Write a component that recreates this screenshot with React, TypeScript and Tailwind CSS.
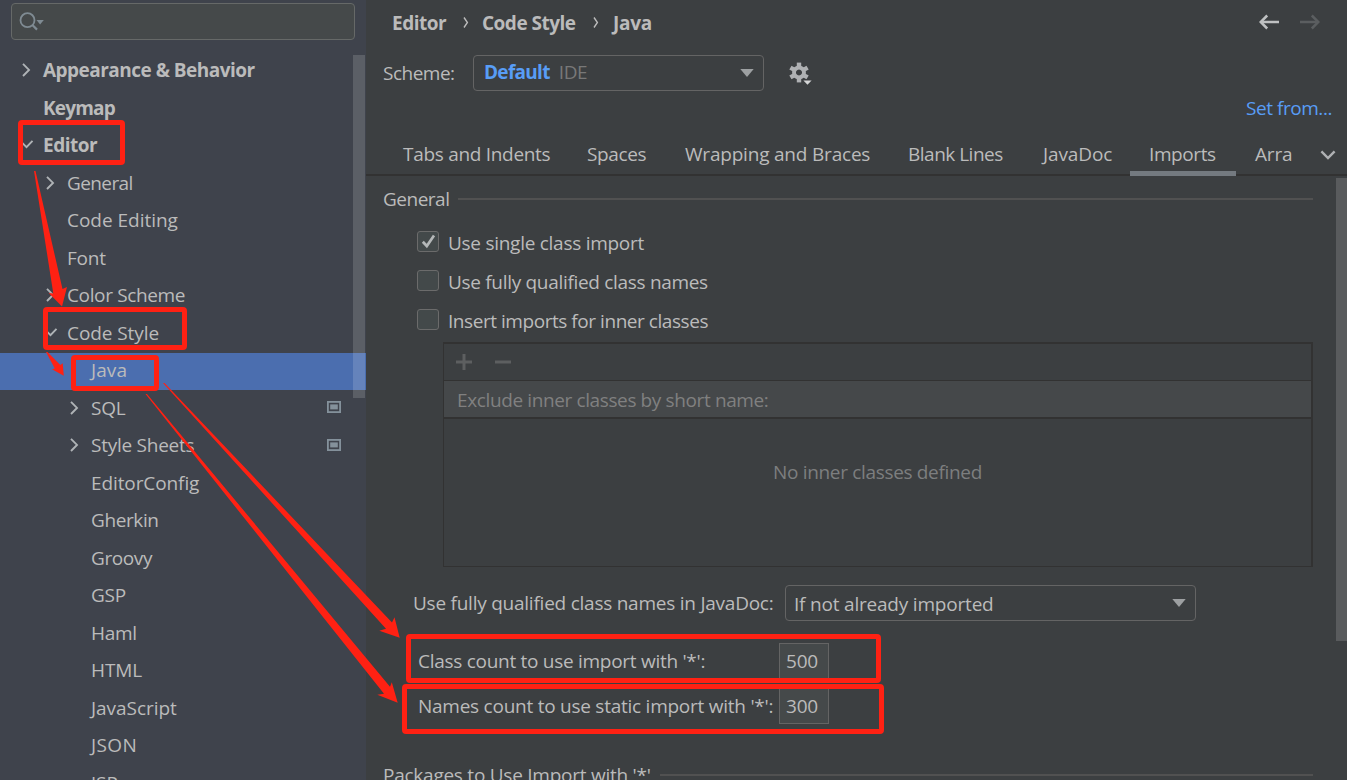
import type { ReactNode } from 'react';

type Arrow = 'right' | 'down' | null;

interface TreeItem {
  label: string;
  indent: string;
  arrow: Arrow;
  text: string;
  selected?: boolean;
  project?: boolean;
}

const L0 = 'pl-[14px]';
const L1 = 'pl-[38px]';
const L2 = 'pl-[62px]';

const tree: TreeItem[] = [
  { label: 'Appearance & Behavior', indent: L0, arrow: 'right', text: 'font-bold tracking-[-0.52px]' },
  { label: 'Keymap', indent: L0, arrow: null, text: 'font-bold tracking-[-0.8px]' },
  { label: 'Editor', indent: L0, arrow: 'down', text: 'font-bold tracking-[-0.5px]' },
  { label: 'General', indent: L1, arrow: 'right', text: 'tracking-[-0.6px]' },
  { label: 'Code Editing', indent: L1, arrow: null, text: 'tracking-[-0.02px]' },
  { label: 'Font', indent: L1, arrow: null, text: 'tracking-[-0.2px]' },
  { label: 'Color Scheme', indent: L1, arrow: 'right', text: 'tracking-[-0.36px]' },
  { label: 'Code Style', indent: L1, arrow: 'down', text: 'tracking-[-0.08px]' },
  { label: 'Java', indent: L2, arrow: null, text: 'tracking-[0.1px]', selected: true },
  { label: 'SQL', indent: L2, arrow: 'right', text: 'tracking-[-0.2px]', project: true },
  { label: 'Style Sheets', indent: L2, arrow: 'right', text: 'tracking-[-0.25px]', project: true },
  { label: 'EditorConfig', indent: L2, arrow: null, text: 'tracking-[-0.1px]' },
  { label: 'Gherkin', indent: L2, arrow: null, text: 'tracking-[-0.4px]' },
  { label: 'Groovy', indent: L2, arrow: null, text: 'tracking-[-0.4px]' },
  { label: 'GSP', indent: L2, arrow: null, text: 'tracking-[-0.3px]' },
  { label: 'Haml', indent: L2, arrow: null, text: 'tracking-[-0.3px]' },
  { label: 'HTML', indent: L2, arrow: null, text: 'tracking-[-0.1px]' },
  { label: 'JavaScript', indent: L2, arrow: null, text: 'tracking-[-0.04px]' },
  { label: 'JSON', indent: L2, arrow: null, text: 'tracking-[0.4px]' },
  { label: 'JSP', indent: L2, arrow: null, text: 'tracking-[0px]' },
];

function TreeChevron({ arrow }: { arrow: Arrow }) {
  return (
    <span className="flex h-5 w-[29px] shrink-0 items-center">
      {arrow && (
        <svg width="24" height="20" viewBox="0 0 24 20" fill="none" stroke="#afb3b6" strokeWidth="1.9">
          {arrow === 'right' ? <path d="M9 3.8 L15 9.9 L9 16" /> : <path d="M7 6.6 L12.5 12.2 L18.5 5.8" />}
        </svg>
      )}
    </span>
  );
}

function TreeRow({ item }: { item: TreeItem }) {
  return (
    <div className={`flex h-[37.5px] shrink-0 items-center pr-[25px] pb-[3px] ${item.indent} ${item.selected ? 'bg-[#4b6eaf]' : ''}`}>
      <TreeChevron arrow={item.arrow} />
      <span className={`flex-1 ${item.text}`}>{item.label}</span>
      {item.project && (
        <svg className="mb-px" width="14" height="12" viewBox="0 0 14 12">
          <rect x="0.9" y="0.9" width="12.2" height="10.2" fill="none" stroke="#84919b" strokeWidth="1.8" />
          <rect x="3.2" y="3.4" width="7.6" height="5" fill="#84919b" />
        </svg>
      )}
    </div>
  );
}

function Sidebar() {
  return (
    <aside className="relative flex w-[366px] shrink-0 flex-col overflow-hidden bg-[#3f434c]">
      <div className="h-[52.75px] shrink-0 pt-[3px] pl-[11px]">
        <div className="flex h-[37px] w-[344px] items-center rounded-[4px] border border-[#666968] bg-[#45494a] pl-[7px]">
          <svg width="28" height="22" viewBox="0 0 28 22" fill="none">
            <circle cx="8.5" cy="9.2" r="7" stroke="#7f8b93" strokeWidth="1.8" />
            <path d="M13.4 14 L18 18.6" stroke="#7f8b93" strokeWidth="2.2" />
            <path d="M17.5 9 H24.8 L21.1 13.6 Z" fill="#7f8b93" />
          </svg>
        </div>
      </div>
      {tree.map((item) => (
        <TreeRow key={item.label} item={item} />
      ))}
      <div className="absolute top-[55px] left-[353px] h-[343px] w-3 bg-white/15" />
    </aside>
  );
}

function Crumb() {
  return (
    <svg width="6" height="13" viewBox="0 0 6 13" fill="none" stroke="#bbbbbb" strokeWidth="1.4">
      <path d="M1 1.5 L4.4 6.5 L1 11.5" />
    </svg>
  );
}

function NavArrow({ className }: { className: string }) {
  return (
    <svg className={className} width="20" height="16" viewBox="0 0 20 16" fill="none" stroke="currentColor" strokeWidth="2.5">
      <path d="M20 8 H2" />
      <path d="M8.2 1.5 L1.7 8 L8.2 14.5" />
    </svg>
  );
}

function Triangle() {
  return (
    <svg width="14" height="8" viewBox="0 0 14 8">
      <path d="M0.3 0 H13.7 L7 8 Z" fill="#9da0a2" />
    </svg>
  );
}

function Gear() {
  return (
    <svg width="24" height="24" viewBox="0 0 24 24">
      <g fill="#afb1b3">
        <path
          fillRule="evenodd"
          d="M10 3.6 a6.9 6.9 0 1 0 0.01 0 Z M10 7.5 a3 3 0 1 1 -0.01 0 Z"
        />
        <rect x="7.8" y="0.6" width="4.4" height="4.6" />
        <rect x="7.8" y="15.8" width="4.4" height="4.6" />
        <rect x="7.8" y="0.6" width="4.4" height="4.6" transform="rotate(60 10 10.5)" />
        <rect x="7.8" y="0.6" width="4.4" height="4.6" transform="rotate(120 10 10.5)" />
        <rect x="7.8" y="0.6" width="4.4" height="4.6" transform="rotate(240 10 10.5)" />
        <rect x="7.8" y="0.6" width="4.4" height="4.6" transform="rotate(300 10 10.5)" />
      </g>
      <path d="M13 17.4 H24 L18.5 24 Z" fill="#3c3f41" />
      <path d="M14.4 18.4 H22.6 L18.5 22.8 Z" fill="#d5d6d7" />
    </svg>
  );
}

const tabs: [string, string, string][] = [
  ['Tabs and Indents', 'w-[184px]', 'tracking-[-0.3px]'],
  ['Spaces', 'w-[98px]', 'tracking-[-0.35px]'],
  ['Wrapping and Braces', 'w-[223px]', 'tracking-[-0.2px]'],
  ['Blank Lines', 'w-[135px]', 'tracking-[-0.5px]'],
  ['JavaDoc', 'w-[106px]', 'tracking-[-0.1px]'],
  ['Imports', 'w-[106px]', 'tracking-[-0.4px]'],
  ['Arra', 'w-[60px]', 'tracking-[-0.2px]'],
];

function Tabs() {
  return (
    <div className="flex h-[43px] shrink-0 items-stretch border-b-2 border-[#323232] pl-[18px]">
      {tabs.map(([label, width, text]) => (
        <div key={label} className={`relative flex shrink-0 items-center justify-start pt-px pl-[19px] ${width} ${text}`}>
          {label}
          {label === 'Imports' && <div className="absolute top-[38px] left-0 h-[5px] w-[106px] bg-[#747a80]" />}
        </div>
      ))}
      <svg className="mt-[16px] ml-[23px]" width="18" height="12" viewBox="0 0 18 12" fill="none" stroke="#afb1b3" strokeWidth="2.4">
        <path d="M2.4 2.4 L9 9 L15.6 2.4" />
      </svg>
    </div>
  );
}

function Section({ title, text }: { title: string; text: string }) {
  return (
    <div className="flex h-[26px] items-center gap-[9px] pr-[34px] pl-[17px]">
      <span className={text}>{title}</span>
      <div className="h-[2px] flex-1 bg-[#515151]" />
    </div>
  );
}

function Check({ label, text, checked }: { label: string; text: string; checked?: boolean }) {
  return (
    <div className="flex h-[39px] items-center gap-[9px] pl-[51px]">
      <div className="flex h-[21px] w-[22px] items-center justify-center rounded-[3px] border border-[#6b6b6b] bg-[#43494a]">
        {checked && (
          <svg width="15" height="15" viewBox="0 0 15 15" fill="none" stroke="#b4b7b8" strokeWidth="2.7">
            <path d="M1.8 7.8 L5.8 12 L13 1.6" />
          </svg>
        )}
      </div>
      <span className={`pt-[3px] ${text}`}>{label}</span>
    </div>
  );
}

function Field({ children }: { children: ReactNode }) {
  return (
    <div className="flex h-9 w-[50px] items-center border border-[#646464] bg-[#45494a] pl-[6px] tracking-[-0.2px]">{children}</div>
  );
}

function CountRow({ label, text, value }: { label: string; text: string; value: string }) {
  return (
    <div className="flex h-[45px] items-start pl-[52px]">
      <span className={`w-[361px] pt-[5px] ${text}`}>{label}</span>
      <Field>{value}</Field>
    </div>
  );
}

function InnerClasses() {
  return (
    <div className="ml-[77px] flex h-[225px] w-[870px] flex-col border-2 border-b-1 border-l-1 border-[#323232]">
      <div className="flex h-[37px] items-center gap-[23px] border-b border-[#323232] pl-[12px]">
        <svg width="16" height="16" viewBox="0 0 16 16" stroke="#5d5f60" strokeWidth="3">
          <path d="M0 8 H16 M8 0 V16" />
        </svg>
        <svg width="16" height="16" viewBox="0 0 16 16" stroke="#5d5f60" strokeWidth="3">
          <path d="M0 8 H16" />
        </svg>
      </div>
      <div className="flex h-[38px] items-center border-b-2 border-[#323232] bg-[#45484a] pt-[2px] pl-[13px] tracking-[-0.38px] text-[#808080]">
        Exclude inner classes by short name:
      </div>
      <div className="flex-1 pt-[40px] text-center tracking-[-0.33px] text-[#7c7e7f]">No inner classes defined</div>
    </div>
  );
}

function Main() {
  return (
    <main className="relative flex flex-1 flex-col overflow-hidden">
      <div className="flex h-11 shrink-0 items-center justify-between pr-[27px] pl-[26px]">
        <div className="flex items-center pt-px font-bold">
          <span className="w-[71px] tracking-[-0.5px]">Editor</span>
          <Crumb />
          <span className="ml-[13px] w-[111px] tracking-[-0.5px]">Code Style</span>
          <Crumb />
          <span className="ml-[14px] tracking-[-0.3px]">Java</span>
        </div>
        <div className="flex items-center gap-[21px]">
          <NavArrow className="text-[#bfc1c2]" />
          <NavArrow className="rotate-180 text-[#5b5e60]" />
        </div>
      </div>
      <div className="flex h-[50px] shrink-0 items-center pt-[7px] pl-[17px]">
        <span className="w-[90px] tracking-[-0.5px]">Scheme:</span>
        <div className="flex h-9 w-[291px] items-center rounded-[4px] border border-[#646464] pr-[9px] pl-[10px]">
          <span className="pb-px font-bold tracking-[-0.7px] text-[#589df6]">Default</span>
          <span className="flex-1 pb-px pl-[9px] tracking-[-0.4px] text-[#787878]">IDE</span>
          <Triangle />
        </div>
        <div className="mt-[3px] ml-[25px]">
          <Gear />
        </div>
      </div>
      <div className="flex h-[39px] shrink-0 items-start justify-end pt-[1px] pr-[15px] tracking-[-0.45px] text-[#589df6]">
        Set from...
      </div>
      <Tabs />
      <div className="flex shrink-0 flex-col pt-[10px]">
        <Section title="General" text="tracking-[-0.5px]" />
        <div className="pt-[10px]">
          <Check label="Use single class import" text="tracking-[-0.27px]" checked />
          <Check label="Use fully qualified class names" text="tracking-[-0.31px]" />
          <Check label="Insert imports for inner classes" text="tracking-[-0.45px]" />
        </div>
        <div className="pt-[3px]">
          <InnerClasses />
        </div>
        <div className="flex items-center pt-[18px] pl-[47px]">
          <span className="w-[372px] tracking-[-0.24px]">Use fully qualified class names in JavaDoc:</span>
          <div className="flex h-9 w-[411px] items-center justify-between rounded-[4px] border border-[#646464] pr-[9px] pl-[8px]">
            <span className="pt-px tracking-[-0.2px]">If not already imported</span>
            <Triangle />
          </div>
        </div>
        <div className="pt-[22px]">
          <CountRow label="Class count to use import with '*':" text="tracking-[-0.28px]" value="500" />
          <CountRow label="Names count to use static import with '*':" text="tracking-[-0.25px]" value="300" />
        </div>
        <div className="pt-[29px]">
          <Section title="Packages to Use Import with '*'" text="tracking-[-0.25px]" />
        </div>
      </div>
      <div className="absolute top-[178px] right-0 h-[463px] w-[11px] bg-[#595b5d]" />
    </main>
  );
}

function Annotations() {
  return (
    <div className="pointer-events-none absolute inset-0">
      <svg className="absolute inset-0" width="1347" height="780" viewBox="0 0 1347 780" fill="#ff2113">
        <path d="M34 171 L35.5 171 L62.5 289 L67 287 L62 306.5 L48.7 293 L53.3 293.5 Z" />
        <path d="M46 352 L47.5 352 L60.3 365 L62.7 363.3 L63.8 375.8 L52 369.3 L54.8 368.6 Z" />
        <path d="M163 383 L164.5 383 L392 622.5 L394.5 617.3 L399.7 637.7 L379.3 630.7 L386 628.7 Z" />
        <path d="M145.5 394 L147 394 L390 686.7 L391.8 682.2 L397.7 702.7 L377.3 694.8 L384 693.7 Z" />
      </svg>
      <div className="absolute top-[120px] left-[18px] h-[45px] w-[107px] rounded-[4px] border-5 border-[#ff2113]" />
      <div className="absolute top-[307px] left-[43px] h-[43px] w-[144px] rounded-[4px] border-5 border-[#ff2113]" />
      <div className="absolute top-[355px] left-[71px] h-[36px] w-[88px] rounded-[4px] border-5 border-[#ff2113]" />
      <div className="absolute top-[634px] left-[406px] h-[49px] w-[475px] rounded-[4px] border-5 border-[#ff2113]" />
      <div className="absolute top-[684px] left-[402px] h-[50px] w-[482px] rounded-[4px] border-5 border-[#ff2113]" />
    </div>
  );
}

export default function App() {
  return (
    <div className="relative flex h-[780px] w-[1347px] overflow-hidden bg-[#3c3f41] font-['Open_Sans','Noto_Sans',sans-serif] text-[19px] leading-[26px] whitespace-nowrap text-[#bbbbbb]">
      <Sidebar />
      <Main />
      <Annotations />
    </div>
  );
}
